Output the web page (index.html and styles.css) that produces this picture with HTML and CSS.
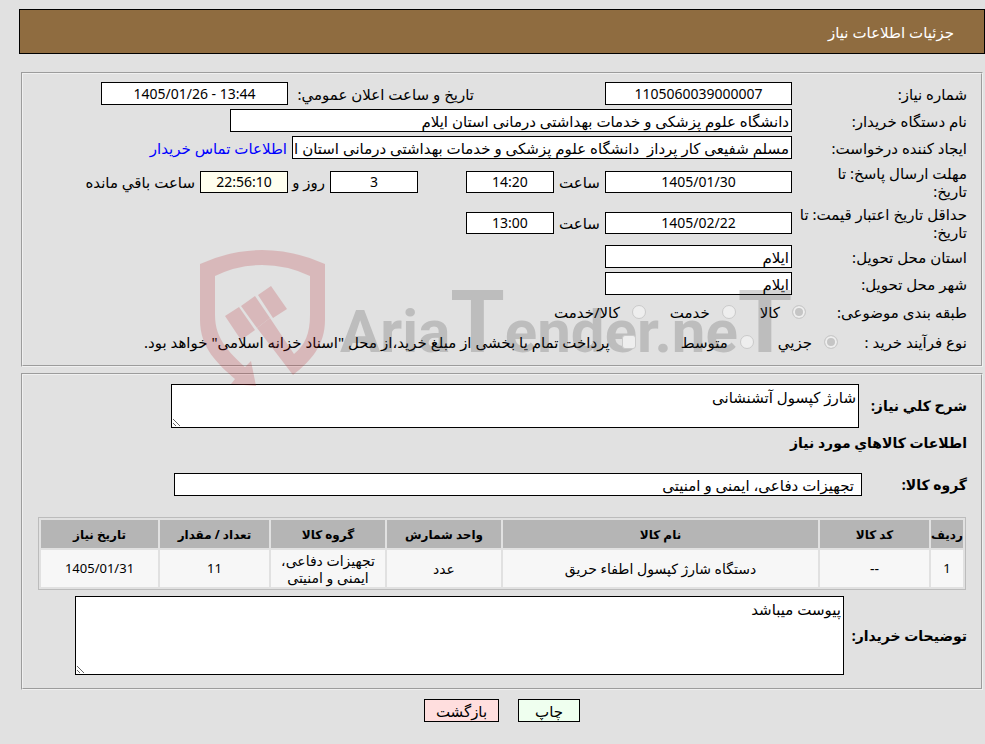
FILE: index.html
```html
<!DOCTYPE html>
<html lang="fa" dir="rtl">
<head>
<meta charset="utf-8">
<title>جزئیات اطلاعات نیاز</title>
<link rel="stylesheet" href="styles.css">
</head>
<body>
<header class="title-bar"><h1>جزئیات اطلاعات نیاز</h1></header>
<main>
<section class="panel details">
  <div class="row">
    <label class="name" for="num">شماره نیاز:</label>
    <div class="first"><input class="box mid center" id="num" value="1105060039000007" readonly></div>
    <label class="announce" for="ann">تاریخ و ساعت اعلان عمومي:</label>
    <input class="box mid center" id="ann" dir="ltr" value="1405/01/26 - 13:44" readonly>
  </div>
  <div class="row">
    <label class="name" for="org">نام دستگاه خریدار:</label>
    <input class="box wide" id="org" value="دانشگاه علوم پزشکی و خدمات بهداشتی درمانی استان ایلام" readonly>
  </div>
  <div class="row">
    <label class="name" for="creator">ایجاد کننده درخواست:</label>
    <input class="box long" id="creator" value="مسلم شفیعی کار پرداز  دانشگاه علوم پزشکی و خدمات بهداشتی درمانی استان ایلام" readonly>
    <a href="#">اطلاعات تماس خریدار</a>
  </div>
  <div class="row tall">
    <label class="name" for="due">مهلت ارسال پاسخ: تا<br>تاریخ:</label>
    <div class="first">
      <input class="box mid center" id="due" value="1405/01/30" readonly>
      <label class="hour" for="dueh">ساعت</label>
      <input class="box small center" id="dueh" value="14:20" readonly>
    </div>
    <input class="box small center days" id="days" value="3" readonly>
    <label class="and" for="days">روز و</label>
    <input class="box small center timer" id="timer" value="22:56:10" readonly>
    <label for="timer">ساعت باقي مانده</label>
  </div>
  <div class="row tall">
    <label class="name" for="valid">حداقل تاریخ اعتبار قیمت: تا<br>تاریخ:</label>
    <div class="first">
      <input class="box mid center" id="valid" value="1405/02/22" readonly>
      <label class="hour" for="validh">ساعت</label>
      <input class="box small center" id="validh" value="13:00" readonly>
    </div>
  </div>
  <div class="row">
    <label class="name" for="prov">استان محل تحویل:</label>
    <input class="box mid" id="prov" value="ایلام" readonly>
  </div>
  <div class="row">
    <label class="name" for="city">شهر محل تحویل:</label>
    <input class="box mid" id="city" value="ایلام" readonly>
  </div>
  <div class="row choices">
    <span class="name" id="cat">طبقه بندی موضوعی:</span>
    <div class="options subject" role="radiogroup" aria-labelledby="cat">
      <label><input type="radio" name="cat" checked disabled><span>کالا</span></label>
      <label><input type="radio" name="cat" disabled><span>خدمت</span></label>
      <label><input type="radio" name="cat" disabled><span>کالا/خدمت</span></label>
    </div>
  </div>
  <div class="row choices">
    <span class="name process" id="proc">نوع فرآیند خرید :</span>
    <div class="options" role="radiogroup" aria-labelledby="proc">
      <label><input type="radio" name="proc" checked disabled><span>جزيي</span></label>
      <label><input type="radio" name="proc" disabled><span>متوسط</span></label>
      <label class="treasury"><input type="checkbox" disabled><span>پرداخت تمام یا بخشی از مبلغ خرید،از محل "اسناد خزانه اسلامی" خواهد بود.</span></label>
    </div>
  </div>
  <svg class="watermark" width="600" height="140" viewBox="200 249 600 140" direction="ltr" aria-hidden="true">
    <g fill="#b71c24">
      <path d="M200 264Q231 250 262 250Q294 250 325 264V320C325 345 311 361 293 375L257 328L270 318L294 354C305 345 310 334 310 315V276Q287 265 262 265Q237 265 215 276V315C215 339 229 352 245 367L251 361L256 386L231 384L235 379C218 364 200 348 200 320Z"/>
      <path d="M258 295L271 286L287 309L273 318ZM241 306L255 296L270 318L257 328ZM225 316L239 307L255 330L241 340Z"/>
    </g>
    <text x="340" y="352" fill="#303030">Aria<tspan class="tee">T</tspan>ender.ne<tspan class="tee">T</tspan></text>
  </svg>
</section>

<section class="panel goods">
  <div class="line">
    <label class="strong" for="desc">شرح کلي نیاز:</label>
    <textarea class="box desc" id="desc">شارژ کپسول آتشنشانی</textarea>
  </div>
  <h2>اطلاعات کالاهاي مورد نیاز</h2>
  <div class="line group">
    <label class="strong" for="grp">گروه کالا:</label>
    <input class="box grp" id="grp" value="تجهیزات دفاعی، ایمنی و امنیتی" readonly>
  </div>
  <table>
    <thead><tr><th class="c1">ردیف</th><th class="c2">کد کالا</th><th>نام کالا</th><th class="c4">واحد شمارش</th><th class="c4">گروه کالا</th><th class="c2">تعداد / مقدار</th><th class="c7">تاریخ نیاز</th></tr></thead>
    <tbody><tr><td class="num">1</td><td>--</td><td>دستگاه شارژ کپسول اطفاء حریق</td><td>عدد</td><td>تجهیزات دفاعی، ایمنی و امنیتی</td><td class="num">11</td><td class="num">1405/01/31</td></tr></tbody>
  </table>
  <div class="line">
    <label class="strong" for="note">توضیحات خریدار:</label>
    <textarea class="box note" id="note">پیوست میباشد</textarea>
  </div>
</section>
<div class="actions">
  <button class="box print" type="button">چاپ</button>
  <button class="box back" type="button">بازگشت</button>
</div>
</main>
</body>
</html>
```
FILE: styles.css
```css
* { box-sizing: border-box; }
body {
  margin: 0;
  padding: 9px 0 0 19px;
  background: #e1e1e1;
  color: #000;
  font: 15px/18px Tahoma, "Noto Sans", "DejaVu Sans", sans-serif;
}
.title-bar {
  height: 45px;
  padding: 0 30px;
  display: flex;
  align-items: center;
  background: #8f6c40;
  border: 1px solid #000;
  color: #fff;
}
h1 { margin: 0; font-size: 15px; font-weight: 400; }
main { padding: 0 2px; }
.panel {
  position: relative;
  margin-top: 18px;
  border: 2px groove #f0f0f0;
  padding: 6px 14px 8px;
}
.goods { margin-top: 6px; padding: 9px 14px 13px; }
input, textarea, button { font: inherit; color: inherit; margin: 0; }
.box {
  height: 23px;
  border: 1px solid #000;
  border-radius: 0;
  background: #fff;
  padding: 0 2px;
}
.row { display: flex; align-items: center; height: 27px; white-space: nowrap; }
.tall { height: 41px; }
.details .tall .box { height: 22px; }
.name { flex: 0 0 175px; }
.first { display: flex; align-items: center; flex: 0 0 326px; }
.mid { width: 187px; }
.small { width: 88px; }
.wide { width: 562px; }
.long { width: 500px; }
.center { text-align: center; font-size: 14px; }
.hour { width: 51px; text-align: center; }
.announce { width: 186px; margin-right: -8px; }
.days { margin-right: 48px; }
.and { width: 42px; padding-right: 5px; }
.timer { background: #ffffef; margin-left: 5px; }
a { color: #00f; text-decoration: none; margin-right: 5px; }
.choices { height: 30px; }
.name.process { flex-basis: 129px; }
.options { display: flex; gap: 24px; }
.subject { margin-right: -14px; }
.options label { display: flex; align-items: center; gap: 12px; }
.options .treasury { margin-right: 21px; }
.options input {
  appearance: none;
  width: 14px;
  height: 14px;
  border: 1px solid #cacaca;
  border-radius: 50%;
  background: #eee;
  position: relative;
  z-index: 2;
}
.options input:checked { background: #c5c5c5; box-shadow: inset 0 0 0 2px #eee; }
.options input[type="checkbox"] { border-radius: 3px; }
.watermark { position: absolute; right: 181px; top: 175px; opacity: .2; pointer-events: none; z-index: 1; }
.watermark text { font: bold 60px Roboto, sans-serif; }
.watermark .tee { font-size: 88px; }
.line { display: flex; align-items: center; gap: 4px; }
.strong, h2 { font-size: 14px; font-weight: 700; line-height: 18px; white-space: nowrap; }
.strong { flex: 0 0 104px; }
h2 { margin: 6px 0 21px; }
textarea.box { display: block; padding: 3px 2px; flex: 0 1 auto; }
.desc { width: 688px; height: 44px; }
.grp { width: 688px; padding: 0 7px; }
.group { gap: 1px; }
.note { width: 769px; height: 79px; }
.line:last-child .strong { flex-basis: 119px; }
table {
  width: calc(100% - 2px);
  margin: 21px 1px 6px;
  border: 1px solid #bcbcbc;
  border-spacing: 2px;
  table-layout: fixed;
  font-size: 14px;
  line-height: 17px;
  text-align: center;
}
th { height: 28px; padding: 0; background: #b5b5b5; font-size: 12px; white-space: nowrap; }
td { height: 37px; padding: 1px; background: #f7f7f7; }
.num { font-size: 13px; }
.c1 { width: 32px; }
.c2 { width: 109px; }
.c4 { width: 114px; }
.c7 { width: 117px; }
.actions { display: flex; justify-content: center; gap: 19px; padding: 9px 0; }
.print { width: 62px; background: #efffef; }
.back { width: 75px; background: #ffdede; }
```
